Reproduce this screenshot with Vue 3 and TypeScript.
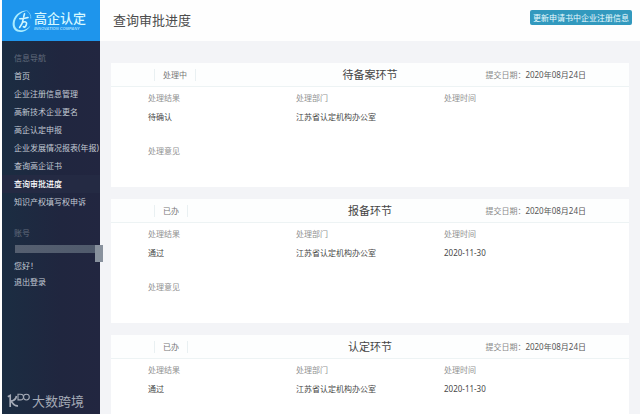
<script setup lang="ts">
interface NavItem {
  label: string
  active?: boolean
}

interface Stage {
  title: string
  status: string
  submitted: string
  result: string
  department: string
  time: string
  opinion?: string
}

const navItems: NavItem[] = [
  { label: '首页' },
  { label: '企业注册信息管理' },
  { label: '高新技术企业更名' },
  { label: '高企认定申报' },
  { label: '企业发展情况报表(年报)' },
  { label: '查询高企证书' },
  { label: '查询审批进度', active: true },
  { label: '知识产权填写权申诉' },
]

const stages: Stage[] = [
  { title: '待备案环节', status: '处理中', submitted: '2020年08月24日', result: '待确认', department: '江苏省认定机构办公室', time: '', opinion: '' },
  { title: '报备环节', status: '已办', submitted: '2020年08月24日', result: '通过', department: '江苏省认定机构办公室', time: '2020-11-30', opinion: '' },
  { title: '认定环节', status: '已办', submitted: '2020年08月24日', result: '通过', department: '江苏省认定机构办公室', time: '2020-11-30' },
]
</script>

<template>
  <div class="page">
    <aside class="sidebar">
      <div class="brand">
        <svg class="brand-mark" viewBox="0 0 20 24" aria-hidden="true">
          <path d="M16 1.500C8 .8 1 7 .6 14.500.4 19.500 3.500 23 8.500 23c4.200 0 8-2.500 10-6.500-2.500 3.200-6 5-9.500 4.800C5 21 2.600 18.500 2.700 14.500 2.900 8.500 8 3 16 1.500z" fill="#a9ecff" />
          <path d="M15.500 2.200c2.300 1.600 3.500 4 3.300 7" fill="none" stroke="#6cc6f8" stroke-width="1" stroke-linecap="round" />
          <path d="M12.500 4.800l-.8 3M7.800 9.800c2.700 0 5.200-.4 8.200-1.300M11.400 9.500c-.5 3.500-1.600 6.500-3.800 9M10.600 13.300c2.400-.9 4.200-.6 4 1.300-.2 1.600-.7 2.800-1.900 3.700l-1.300-.6" fill="none" stroke="#d3f8ff" stroke-width="1.600" stroke-linecap="round" stroke-linejoin="round" />
        </svg>
        <div class="brand-text">
          <strong class="brand-name">高企认定</strong>
          <span class="brand-sub">INNOVATION COMPANY</span>
        </div>
      </div>

      <nav class="nav">
        <h2 class="group">信息导航</h2>
        <a v-for="item in navItems" :key="item.label" href="#" class="nav-link" :class="{ active: item.active }">{{ item.label }}</a>
      </nav>

      <section class="account">
        <h2 class="group">账号</h2>
        <div class="masked"><span class="masked-end"></span></div>
        <p class="hello">您好！</p>
        <a href="#" class="logout">退出登录</a>
      </section>

      <div class="watermark">
        <svg class="watermark-mark" viewBox="0 0 23 16" aria-hidden="true">
          <path d="M.8 3.800L3.200 2.500v11.500M9.500 3C8.800 6.200 6.500 8 3.400 8.200c2.800.2 2 5.300 7.600 4.600" fill="none" stroke="currentColor" stroke-width="1.700" />
          <path d="M11 .8v6.700M11 1.300h2.500c4 0 4 5.600 0 5.600H11" fill="none" stroke="currentColor" stroke-width="1.100" />
          <circle cx="19.400" cy="4.100" r="2.900" fill="none" stroke="currentColor" stroke-width="1.100" />
        </svg>
        <span>大数跨境</span>
      </div>
    </aside>

    <main class="main">
      <header class="topbar">
        <h1 class="title">查询审批进度</h1>
        <button type="button" class="update">更新申请书中企业注册信息</button>
      </header>

      <div class="cards">
        <article v-for="stage in stages" :key="stage.title" class="card">
          <header class="card-head">
            <span class="status">{{ stage.status }}</span>
            <h2 class="card-title">{{ stage.title }}</h2>
            <p class="date"><span class="date-label">提交日期：</span>{{ stage.submitted }}</p>
          </header>
          <dl class="fields">
            <div>
              <dt>处理结果</dt>
              <dd>{{ stage.result }}</dd>
            </div>
            <div>
              <dt>处理部门</dt>
              <dd>{{ stage.department }}</dd>
            </div>
            <div>
              <dt>处理时间</dt>
              <dd>{{ stage.time }}</dd>
            </div>
            <div v-if="stage.opinion !== undefined" class="opinion">
              <dt>处理意见</dt>
              <dd>{{ stage.opinion }}</dd>
            </div>
          </dl>
        </article>
      </div>
    </main>
  </div>
</template>

<style>
body {
  margin: 0;
  background: #fff;
}
</style>

<style scoped>
.page {
  display: flex;
  height: 100vh;
  overflow: hidden;
  padding: 0 1px 0 2px;
  font-family: "Noto Sans", "Noto Sans CJK SC", sans-serif;
  font-size: 8px;
  color: #555;
}

h1,
h2,
p,
dl,
dd {
  margin: 0;
  font-weight: 400;
}

a {
  text-decoration: none;
}

.sidebar {
  flex: none;
  display: flex;
  flex-direction: column;
  width: 98px;
  background: linear-gradient(90deg, #1b2d42, #20263f 60%, #222640);
}

.brand {
  display: flex;
  align-items: center;
  gap: 2px;
  height: 41px;
  padding-left: 10px;
  background: #1e95ec;
}

.brand-mark {
  flex: none;
  width: 20px;
  height: 24px;
}

.brand-text {
  display: flex;
  flex-direction: column;
  white-space: nowrap;
  color: #d6f8ff;
}

.brand-name {
  font-size: 13px;
  font-weight: 500;
  line-height: 16px;
}

.brand-sub {
  font-family: "Liberation Sans", sans-serif;
  font-size: 4px;
  line-height: 6px;
  font-style: italic;
  font-weight: 700;
  color: #9fdcff;
}

.nav {
  display: flex;
  flex-direction: column;
  padding-top: 8px;
}

.group {
  padding-left: 12px;
  font-size: 8px;
  line-height: 18px;
  color: #626b7c;
}

.nav-link {
  padding-left: 12px;
  line-height: 18px;
  white-space: nowrap;
  color: #c3cad4;
}

.nav-link.active {
  background: #242a43;
  font-weight: 500;
  color: #fff;
}

.account {
  padding-top: 13px;
}

.masked {
  display: flex;
  justify-content: flex-end;
  height: 8px;
  margin: 3px -3px 5px 13px;
  background: linear-gradient(90deg, #555f70, #505a6c);
}

.masked-end {
  flex: none;
  position: relative;
  width: 8px;
  height: 17px;
  background: #88919d;
}

.hello,
.logout {
  display: block;
  padding-left: 12px;
  line-height: 16px;
  color: #c3cad4;
}

.watermark {
  display: flex;
  align-items: center;
  gap: 2px;
  margin-top: auto;
  padding: 0 0 4px 5px;
  font-size: 13px;
  line-height: 18px;
  white-space: nowrap;
  color: #a5abb7;
}

.watermark-mark {
  flex: none;
  width: 23px;
  height: 16px;
}

.main {
  flex: 1;
  min-width: 0;
  background: #f3f4f7;
}

.topbar {
  display: flex;
  align-items: flex-start;
  justify-content: space-between;
  height: 31px;
  padding: 10px 8px 0 13px;
  background: #fefefe;
}

.title {
  font-size: 13px;
  line-height: 20px;
  color: #4c4c4c;
}

.update {
  height: 15px;
  padding: 0 3px;
  border: 0;
  border-radius: 2px;
  background: #3299be;
  font: inherit;
  line-height: 15px;
  white-space: nowrap;
  color: #e9fbff;
}

.cards {
  display: flex;
  flex-direction: column;
  gap: 12px;
  padding: 22px 11px 0;
}

.card {
  min-height: 124px;
  background: #fff;
}

.card-head {
  display: grid;
  grid-template-columns: 1fr auto 1fr;
  align-items: center;
  height: 23px;
  padding: 0 43px;
  border-bottom: 1px solid #edf3f4;
  background: #fdfefe;
}

.status {
  justify-self: start;
  padding: 0 8px;
  border: solid #e9f0f2;
  border-width: 0 1px;
  line-height: 12px;
  color: #777;
}

.card-title {
  font-size: 11px;
  line-height: 16px;
  color: #444;
}

.date {
  justify-self: end;
  white-space: nowrap;
  line-height: 12px;
}

.date-label {
  color: #888;
}

.fields {
  display: grid;
  grid-template-columns: repeat(3, 1fr);
  padding: 1px 37px 0;
}

.fields dt,
.fields dd {
  min-height: 19px;
  line-height: 19px;
}

.fields dt {
  color: #929292;
}

.fields dd {
  color: #484848;
}

.opinion {
  grid-column: 1 / -1;
  padding-top: 15px;
}
</style>
